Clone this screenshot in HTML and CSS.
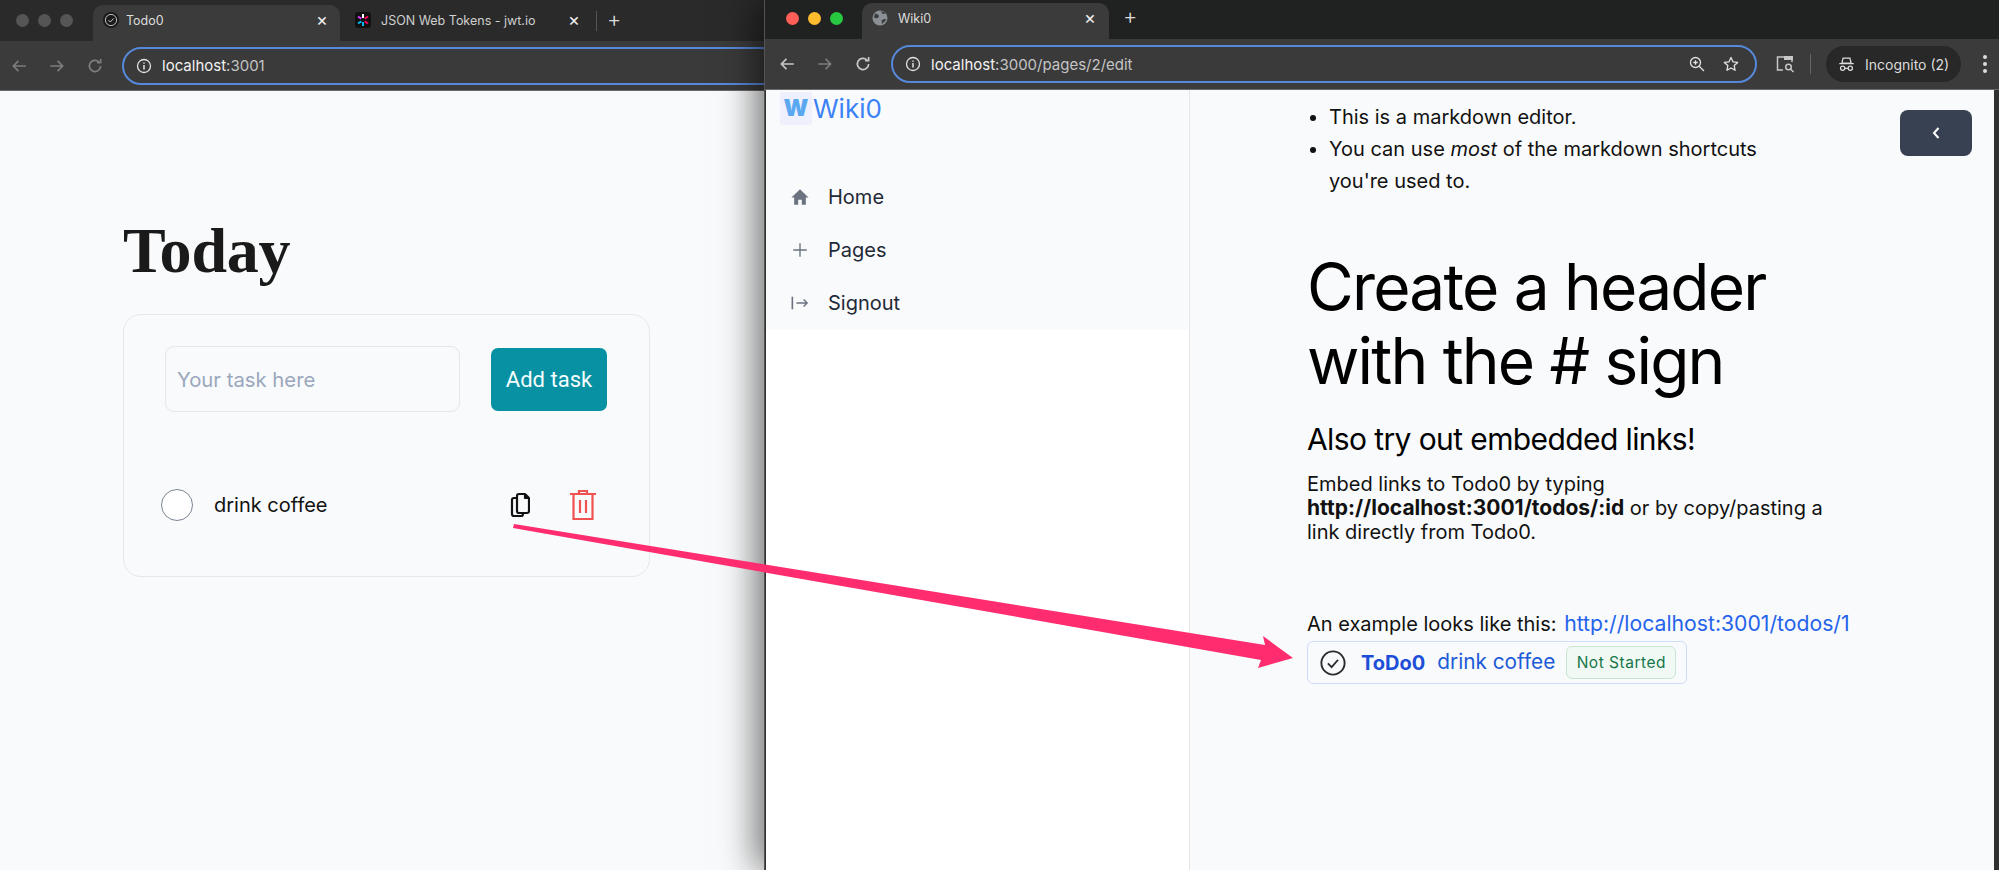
FILE: index.html
```html
<!DOCTYPE html>
<html lang="en">
<head>
<meta charset="utf-8">
<title>Todo0 and Wiki0</title>
<link rel="stylesheet" href="styles.css">
</head>
<body>
<div class="desktop">
  <section class="window win-todo">
    <div class="tabbar tabbar-todo">
      <div class="lights"><i class="light dim"></i><i class="light dim"></i><i class="light dim"></i></div>
      <div class="tab tab-active tab-todo">
        <svg class="fav" viewBox="0 0 16 16"><circle cx="8" cy="8" r="8" fill="#1a1a1a"/><circle cx="8" cy="8" r="5.6" fill="none" stroke="#bbb" stroke-width="1"/><path d="M5.5 8.2l1.8 1.8 3.4-3.6" fill="none" stroke="#ccc" stroke-width="1"/></svg>
        <span class="tab-title">Todo0</span><span class="tab-x">×</span>
      </div>
      <div class="tab tab-jwt">
        <svg class="fav" viewBox="0 0 16 16"><rect width="16" height="16" rx="3" fill="#111"/><g stroke-width="2"><path d="M8 2v4" stroke="#fff"/><path d="M8 10v4" stroke="#00b9f1"/><path d="M3 4.5l3.3 2.2" stroke="#d63aff"/><path d="M13 4.5l-3.3 2.2" stroke="#fb015b"/><path d="M3 11.5l3.3-2.2" stroke="#00b9f1"/><path d="M13 11.5l-3.3-2.2" stroke="#fb015b"/></g></svg>
        <span class="tab-title">JSON Web Tokens - jwt.io</span><span class="tab-x">×</span>
      </div>
      <i class="tab-sep"></i>
      <span class="tab-plus">+</span>
    </div>
    <div class="toolbar">
      <svg class="tool dim-tool" viewBox="0 0 16 16"><path d="M14 8H3M7.5 3.5L3 8l4.500 4.500" fill="none" stroke="currentColor" stroke-width="1.500"/></svg>
      <svg class="tool dim-tool" viewBox="0 0 16 16"><path d="M2 8h11M8.500 3.500L13 8l-4.500 4.500" fill="none" stroke="currentColor" stroke-width="1.500"/></svg>
      <svg class="tool dim-tool" viewBox="0 0 16 16"><path d="M13 8a5 5 0 1 1-1.600-3.700M13 1.800v3.200H9.800" fill="none" stroke="currentColor" stroke-width="1.500"/></svg>
      <div class="omnibox omni-todo">
        <svg class="info" viewBox="0 0 16 16"><circle cx="8" cy="8" r="6.500" fill="none" stroke="currentColor" stroke-width="1.300"/><path d="M8 7v4.500M8 4.400v1.300" stroke="currentColor" stroke-width="1.500"/></svg>
        <span class="url"><b>localhost</b>:3001</span>
      </div>
    </div>
    <main class="todo-page">
      <h1 class="today">Today</h1>
      <div class="todo-card">
        <div class="todo-form">
          <div class="task-input">Your task here</div>
          <div class="add-btn">Add task</div>
        </div>
        <div class="todo-row">
          <i class="todo-check"></i>
          <span class="todo-name">drink coffee</span>
          <svg class="icon-copy" viewBox="0 0 20 26"><path d="M9 2h6l4 4v13a2 2 0 0 1-2 2H9a2 2 0 0 1-2-2V4a2 2 0 0 1 2-2zM15 2v4h4M7 6H4a2 2 0 0 0-2 2v14a2 2 0 0 0 2 2h7a2 2 0 0 0 2-2v-1" fill="none" stroke="#111" stroke-width="2.200" stroke-linejoin="round"/></svg>
          <svg class="icon-trash" viewBox="0 0 26 32"><path d="M0 5h26M9 4V2h8v2M3.500 5v25h19V5M10 11v13M16 11v13" fill="none" stroke="#f05252" stroke-width="2.200"/></svg>
        </div>
      </div>
    </main>
  </section>

  <section class="window win-wiki">
    <div class="tabbar tabbar-wiki">
      <div class="lights lights-wiki"><i class="light red"></i><i class="light yellow"></i><i class="light green"></i></div>
      <div class="tab tab-active tab-wiki">
        <svg class="fav" viewBox="0 0 16 16"><circle cx="8" cy="8" r="7.500" fill="#8b9096"/><path d="M3 3.500l3 1 1 2-2 2-3-1M9 1l1 2.500 2.500 .5 1-1M10 14l-.5-3.500L12 9l2.500 .5" fill="#3b3b3b"/></svg>
        <span class="tab-title">Wiki0</span><span class="tab-x">×</span>
      </div>
      <span class="tab-plus tab-plus-wiki">+</span>
    </div>
    <div class="toolbar toolbar-wiki">
      <svg class="tool" viewBox="0 0 16 16"><path d="M14 8H3M7.500 3.500L3 8l4.500 4.500" fill="none" stroke="currentColor" stroke-width="1.500"/></svg>
      <svg class="tool dim-tool" viewBox="0 0 16 16"><path d="M2 8h11M8.500 3.500L13 8l-4.500 4.500" fill="none" stroke="currentColor" stroke-width="1.500"/></svg>
      <svg class="tool" viewBox="0 0 16 16"><path d="M13 8a5 5 0 1 1-1.600-3.700M13 1.800v3.200H9.800" fill="none" stroke="currentColor" stroke-width="1.500"/></svg>
      <div class="omnibox omni-wiki">
        <svg class="info" viewBox="0 0 16 16"><circle cx="8" cy="8" r="6.500" fill="none" stroke="currentColor" stroke-width="1.300"/><path d="M8 7v4.500M8 4.400v1.300" stroke="currentColor" stroke-width="1.500"/></svg>
        <span class="url"><b>localhost</b>:3000/pages/2/edit</span>
        <svg class="omni-icon zoom-icon" viewBox="0 0 16 16"><circle cx="6.500" cy="6.500" r="5" fill="none" stroke="currentColor" stroke-width="1.300"/><path d="M10.200 10.200L15 15M4.300 6.500h4.400M6.500 4.300v4.400" stroke="currentColor" stroke-width="1.300"/></svg>
        <svg class="omni-icon" viewBox="0 0 16 16"><path d="M8 1.500l2 4.300 4.700 .6-3.500 3.200 .9 4.700L8 12l-4.100 2.300 .9-4.700-3.500-3.200 4.700-.6z" fill="none" stroke="currentColor" stroke-width="1.300" stroke-linejoin="round"/></svg>
      </div>
      <svg class="tab-search" viewBox="0 0 20 20"><path d="M8 16H2.500V3H17v5" fill="none" stroke="currentColor" stroke-width="1.500"/><rect x="9" y="2" width="9" height="4" fill="currentColor"/><circle cx="13.500" cy="13" r="2.800" fill="none" stroke="currentColor" stroke-width="1.500"/><path d="M15.500 15l3 3" stroke="currentColor" stroke-width="1.500"/></svg>
      <i class="tool-sep"></i>
      <div class="incognito">
        <svg class="spy" viewBox="0 0 20 20"><path d="M6 2.500h8l1.500 6h-11zM1.500 9h17" fill="none" stroke="currentColor" stroke-width="1.500"/><circle cx="5.500" cy="14.500" r="2.500" fill="none" stroke="currentColor" stroke-width="1.500"/><circle cx="14.500" cy="14.500" r="2.500" fill="none" stroke="currentColor" stroke-width="1.500"/><path d="M8 14.500h4" stroke="currentColor" stroke-width="1.500"/></svg>
        <span>Incognito (2)</span>
      </div>
      <div class="dots"><i></i><i></i><i></i></div>
    </div>
    <div class="wiki-page">
      <aside class="sidebar">
        <div class="side-top">
          <div class="brand"><span class="brand-mark">W</span><span class="brand-name">Wiki0</span></div>
          <nav class="nav">
            <div class="nav-item">
              <svg class="nav-icon" viewBox="0 0 20 20"><path d="M10 1.500L0.500 10.500H3.500V18.500H8V13h4v5.500h4.500V10.500h3z" fill="#6b7280"/></svg>
              <span>Home</span>
            </div>
            <div class="nav-item">
              <svg class="nav-icon" viewBox="0 0 20 20"><path d="M10 2.500v15M2.500 10h15" stroke="#6b7280" stroke-width="1.500" fill="none"/></svg>
              <span>Pages</span>
            </div>
            <div class="nav-item">
              <svg class="nav-icon" viewBox="0 0 20 20"><path d="M1.500 3v14" stroke="#6b7280" stroke-width="1.800"/><path d="M6 10h12M14 6l4 4-4 4" stroke="#6b7280" stroke-width="1.500" fill="none"/></svg>
              <span>Signout</span>
            </div>
          </nav>
        </div>
      </aside>
      <main class="editor">
        <div class="doc">
          <ul class="doc-list">
            <li>This is a markdown editor.</li>
            <li>You can use <em>most</em> of the markdown shortcuts you're used to.</li>
          </ul>
          <h1 class="doc-h1">Create a header with the # sign</h1>
          <h2 class="doc-h2">Also try out embedded links!</h2>
          <p class="doc-p">Embed links to Todo0 by typing <strong class="doc-strong">http://localhost:3001/todos/:id</strong> or by copy/pasting a link directly from Todo0.</p>
          <p class="doc-example">An example looks like this: <a class="doc-link">http://localhost:3001/todos/1</a></p>
          <div class="embed">
            <svg class="embed-icon" viewBox="0 0 28 28"><circle cx="14" cy="14" r="12.500" fill="none" stroke="#2b2b2b" stroke-width="2"/><path d="M8.500 14.500l4 4 7-8" fill="none" stroke="#2b2b2b" stroke-width="2"/></svg>
            <b class="embed-brand">ToDo0</b>
            <span class="embed-name">drink coffee</span>
            <span class="badge">Not Started</span>
          </div>
        </div>
        <div class="collapse-btn">
          <svg viewBox="0 0 10 14" class="chev"><path d="M7.500 2L3 7l4.500 5" fill="none" stroke="#fff" stroke-width="2"/></svg>
        </div>
      </main>
    </div>
  </section>

  <svg class="arrow" viewBox="0 0 1999 870"><polygon points="514,524 1265,645 1263,636 1293,658 1258,668 1261,660 513,528" fill="#ff2d6f"/></svg>
</div>
</body>
</html>
```

FILE: styles.css
```css
* { box-sizing: border-box; }
html, body { margin: 0; padding: 0; }
body { font-family: Inter, "Liberation Sans", sans-serif; color: #111; background: #fff; }
.desktop { position: relative; width: 1999px; height: 870px; overflow: hidden; }
i { display: block; }

.window { position: absolute; top: 0; height: 870px; display: flex; flex-direction: column; }
.win-todo { left: 0; width: 780px; background: #f9fafb; }
.win-wiki { left: 764px; width: 1235px; background: #303030; box-shadow: -8px 0 34px rgba(0,0,0,.55); padding-left: 1px; border-left: 1px solid #555; }

.tabbar { display: flex; align-items: flex-end; flex: none; color: #ddd; font-size: 13px; }
.tabbar-todo { height: 41px; background: #2a2a2a; }
.tabbar-wiki { height: 39px; background: #202221; margin-left: -1px; }
.lights { display: flex; gap: 9px; align-self: center; padding: 0 20px 0 16px; }
.lights-wiki { padding: 0 19px 0 21px; margin-bottom: 3px; }
.light { width: 13px; height: 13px; border-radius: 50%; }
.dim { background: #555; }
.red { background: #ff5f57; }
.yellow { background: #febc2e; }
.green { background: #28c840; }

.tab { display: flex; align-items: center; gap: 10px; height: 36px; padding: 0 12px 6px; border-radius: 10px 10px 0 0; }
.tab-active { background: #3b3b3b; }
.tab-todo { width: 247px; padding-left: 10px; gap: 7px; }
.tab-jwt { width: 250px; padding: 0 10px 6px 15px; color: #cfcfcf; }
.tab-wiki { width: 247px; padding: 0 13px 6px 10px; }
.fav { width: 16px; height: 16px; flex: none; }
.tab-title { flex: 1; white-space: nowrap; font-size: 12.5px; }
.tab-x { font-size: 18px; line-height: 1; color: #eee; }
.tab-sep { width: 1px; height: 20px; background: #555; align-self: center; margin-left: 6px; }
.tab-plus { align-self: center; font-size: 22px; line-height: 1; color: #ddd; padding: 0 10px; font-weight: 300; margin-bottom: 3px; }
.tab-plus-wiki { padding-left: 14px; margin-bottom: 7px; }

.toolbar { display: flex; align-items: center; flex: none; height: 50px; background: #3b3b3b; color: #c7c7c7; padding-left: 10px; gap: 20px; border-bottom: 1px solid #6b6b6b; }
.toolbar-wiki { margin-left: -1px; padding-left: 13px; height: 51px; }
.tool { width: 18px; height: 18px; flex: none; }
.dim-tool { color: #7d7d7d; }
.omnibox { display: flex; align-items: center; height: 38px; border: 2px solid #5689dc; border-radius: 19px; background: #3a3a3a; color: #e2e2e2; padding: 0 16px 0 12px; gap: 10px; }
.omni-todo { width: 720px; margin-left: -2px; }
.omni-wiki { width: 866px; margin-left: -1px; }
.info { width: 16px; height: 16px; flex: none; }
.url { flex: 1; font-size: 15px; color: #c4c4c4; }
.url b { font-weight: 400; color: #f2f2f2; }
.omni-icon { width: 16px; height: 16px; flex: none; }
.zoom-icon { margin-right: 8px; }
.tab-search { width: 20px; height: 20px; flex: none; margin-left: -2px; }
.tool-sep { width: 1px; height: 20px; background: #666; margin: 0 -5px; }
.incognito { display: flex; align-items: center; gap: 10px; height: 36px; width: 135px; padding: 0 12px; border-radius: 18px; background: #272827; font-size: 14px; white-space: nowrap; color: #dcdcdc; }
.spy { width: 17px; height: 17px; flex: none; }
.dots { display: flex; flex-direction: column; gap: 3px; margin-left: 2px; }
.dots i { width: 4px; height: 4px; border-radius: 50%; background: #ddd; }

.todo-page { flex: 1; padding: 0 0 0 123px; background: #f9fafb; }
.today { margin: 0; padding-top: 128px; font: 700 64px/1 "Liberation Serif", serif; color: #1a1a1a; letter-spacing: -.2px; }
.todo-card { width: 527px; height: 263px; margin-top: 31px; border: 1px solid #e5e7eb; border-radius: 18px; padding: 31px 42px 0 41px; }
.todo-form { display: flex; align-items: center; justify-content: space-between; }
.task-input { width: 295px; height: 66px; padding-left: 11px; display: flex; align-items: center; border: 1px solid #e2e6ee; border-radius: 9px; font-size: 20.300px; color: #9aa7bd; }
.add-btn { width: 116px; height: 63px; display: flex; align-items: center; justify-content: center; background: #0891a2; border-radius: 7px; color: #f6fdff; font-size: 22px; font-family: Roboto, sans-serif; }
.todo-row { display: flex; align-items: center; margin: 77px 0 0 -4px; }
.todo-check { width: 32px; height: 32px; border-radius: 50%; border: 1px solid #7d8595; background: #fff; flex: none; }
.todo-name { margin-left: 21px; flex: 1; font-size: 20px; color: #111; }
.icon-copy { width: 20px; height: 26px; flex: none; }
.icon-trash { width: 26px; height: 32px; margin: 0 11px 0 40px; flex: none; }

.wiki-page { flex: 1; display: flex; margin-right: 5px; background: #f9fafb; min-height: 0; }
.sidebar { width: 424px; flex: none; background: #fff; border-right: 1px solid #e5e7eb; }
.side-top { height: 240px; background: #f9fafb; padding-left: 15px; }
.brand { display: flex; align-items: flex-start; height: 36px; margin-left: -1px; }
.brand-mark { width: 32px; height: 33px; margin-top: 2px; display: flex; align-items: center; justify-content: center; background: #eef0fd; border-radius: 3px; color: #5aa9f0; font-weight: 900; font-size: 23px; line-height: 1; }
.brand-name { margin-left: 1px; color: #3b82f6; font-size: 26px; line-height: 38px; }
.nav { padding-top: 44px; }
.nav-item { display: flex; align-items: center; height: 53px; font-size: 20px; color: #1f2937; }
.nav-icon { width: 18px; height: 18px; margin: 0 19px 0 10px; flex: none; }

.editor { position: relative; flex: 1; padding-left: 117px; min-width: 0; }
.doc { width: 550px; font-size: 20px; line-height: 32px; color: #111; }
.doc-list { margin: 11px 0 0; padding: 0 0 0 22px; width: 500px; }
.doc-h1 { margin: 53px 0 0; font-weight: 400; font-size: 64px; letter-spacing: -1.800px; line-height: 74px; color: #000; }
.doc-h2 { margin: 21px 0 0; font-weight: 400; font-size: 30px; letter-spacing: -.6px; line-height: 40px; color: #000; }
.doc-p { margin: 13px 0 0; width: 540px; line-height: 24px; }
.doc-strong { font-size: 21px; }
.doc-example { margin: 63px 0 0; white-space: nowrap; }
.doc-link { color: #2563eb; font-size: 21.200px; margin-left: 2px; }
.embed { display: inline-flex; align-items: center; margin-top: 1px; height: 43px; padding: 0 10px 0 12px; border: 1px solid #cfdcfb; border-radius: 6px; color: #2563eb; line-height: 1; }
.embed-icon { width: 26px; height: 26px; margin-right: 15px; flex: none; }
.embed-brand { color: #1d4ed8; font-weight: 700; }
.embed-name { margin-left: 12px; color: #1d5bd8; font-size: 20.800px; }
.badge { margin-left: 11px; width: 110px; height: 33px; display: flex; align-items: center; justify-content: center; background: #f0f9f4; border: 1px solid #c7e6d2; border-radius: 6px; color: #15764a; font-size: 15.500px; letter-spacing: .5px; font-weight: 400; }
.collapse-btn { position: absolute; top: 20px; right: 22px; width: 72px; height: 46px; display: flex; align-items: center; justify-content: center; background: #374151; border-radius: 8px; }
.chev { width: 10px; height: 14px; }

.arrow { position: absolute; inset: 0; width: 1999px; height: 870px; pointer-events: none; }
```
